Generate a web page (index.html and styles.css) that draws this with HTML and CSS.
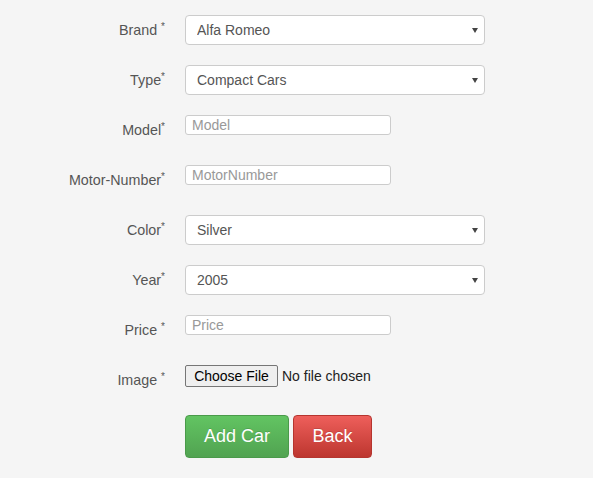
FILE: index.html
```html
<!DOCTYPE html>
<html>
<head>
<meta charset="utf-8">
<link rel="stylesheet" href="styles.css">
</head>
<body>
<form class="car-form">
  <div class="row">
    <label class="label">Brand <sup>*</sup></label>
    <div class="select-wrap"><select class="select"><option>Alfa Romeo</option></select></div>
  </div>
  <div class="row">
    <label class="label">Type<sup>*</sup></label>
    <div class="select-wrap"><select class="select"><option>Compact Cars</option></select></div>
  </div>
  <div class="row">
    <label class="label">Model<sup>*</sup></label>
    <input class="text-input" type="text" placeholder="Model">
  </div>
  <div class="row">
    <label class="label">Motor-Number<sup>*</sup></label>
    <input class="text-input" type="text" placeholder="MotorNumber">
  </div>
  <div class="row">
    <label class="label">Color<sup>*</sup></label>
    <div class="select-wrap"><select class="select"><option>Silver</option></select></div>
  </div>
  <div class="row">
    <label class="label">Year<sup>*</sup></label>
    <div class="select-wrap"><select class="select"><option>2005</option></select></div>
  </div>
  <div class="row">
    <label class="label">Price <sup>*</sup></label>
    <input class="text-input" type="text" placeholder="Price">
  </div>
  <div class="row">
    <label class="label">Image <sup>*</sup></label>
    <div class="file">
      <span class="file-btn">Choose File</span>
      <span class="file-name">No file chosen</span>
    </div>
  </div>
  <div class="actions">
    <button type="button" class="btn btn-green">Add Car</button>
    <button type="button" class="btn btn-red">Back</button>
  </div>
</form>
</body>
</html>
```

FILE: styles.css
```css
html, body {
  margin: 0;
  padding: 0;
  background: #f5f5f5;
}
body {
  font-family: "Liberation Sans", Arial, sans-serif;
  font-size: 14px;
  color: #555;
  width: 593px;
  height: 478px;
  overflow: hidden;
}
.car-form {
  padding-top: 15px;
  display: flex;
  flex-direction: column;
}
.row {
  display: flex;
  align-items: flex-start;
  height: 50px;
}
.label {
  width: 165px;
  flex: none;
  text-align: right;
  padding-top: 5px;
  line-height: 20px;
  margin-right: 20px;
  font-size: 14.3px;
  color: #555;
  white-space: nowrap;
}
.label sup {
  font-size: 10px;
  vertical-align: 5px;
  line-height: 0;
}
.select-wrap {
  position: relative;
  width: 300px;
  height: 30px;
}
.select-wrap::after {
  content: "";
  position: absolute;
  right: 7px;
  top: 13px;
  border-left: 3px solid transparent;
  border-right: 3px solid transparent;
  border-top: 5px solid #444;
  pointer-events: none;
}
.select {
  -webkit-appearance: none;
  appearance: none;
  box-sizing: border-box;
  width: 300px;
  height: 30px;
  margin: 0;
  padding: 0 20px 0 11px;
  border: 1px solid #ccc;
  border-radius: 4px;
  background: #fff;
  font-family: "Liberation Sans", Arial, sans-serif;
  font-size: 14px;
  color: #555;
  outline: none;
}
.text-input {
  box-sizing: border-box;
  width: 206px;
  height: 20px;
  margin: 0;
  padding: 0 6px;
  border: 1px solid #ccc;
  border-radius: 3px;
  background: #fff;
  font-family: "Liberation Sans", Arial, sans-serif;
  font-size: 14px;
  color: #555;
  outline: none;
}
.text-input::placeholder {
  color: #999;
}
.file {
  display: flex;
  align-items: center;
  height: 22px;
}
.file-btn {
  box-sizing: border-box;
  height: 22px;
  width: 93px;
  display: flex;
  align-items: center;
  justify-content: center;
  border: 1px solid #767676;
  border-radius: 2px;
  background: #efefef;
  color: #000;
  font-size: 14px;
}
.file-name {
  margin-left: 4px;
  color: #222;
  font-size: 14px;
}
.actions {
  display: flex;
  gap: 4px;
  padding-left: 185px;
}
.btn {
  box-sizing: border-box;
  height: 43px;
  padding: 0;
  border-radius: 4px;
  font-family: "Liberation Sans", Arial, sans-serif;
  font-size: 18px;
  color: #fff;
  white-space: nowrap;
  text-shadow: 0 -1px 0 rgba(0, 0, 0, 0.15);
  cursor: pointer;
}
.btn-green {
  width: 104px;
  background: linear-gradient(#62c462, #51a351);
  border: 1px solid #4a9a4a;
}
.btn-red {
  width: 79px;
  background: linear-gradient(#ee5f5b, #bd362f);
  border: 1px solid #b5352f;
}
```
